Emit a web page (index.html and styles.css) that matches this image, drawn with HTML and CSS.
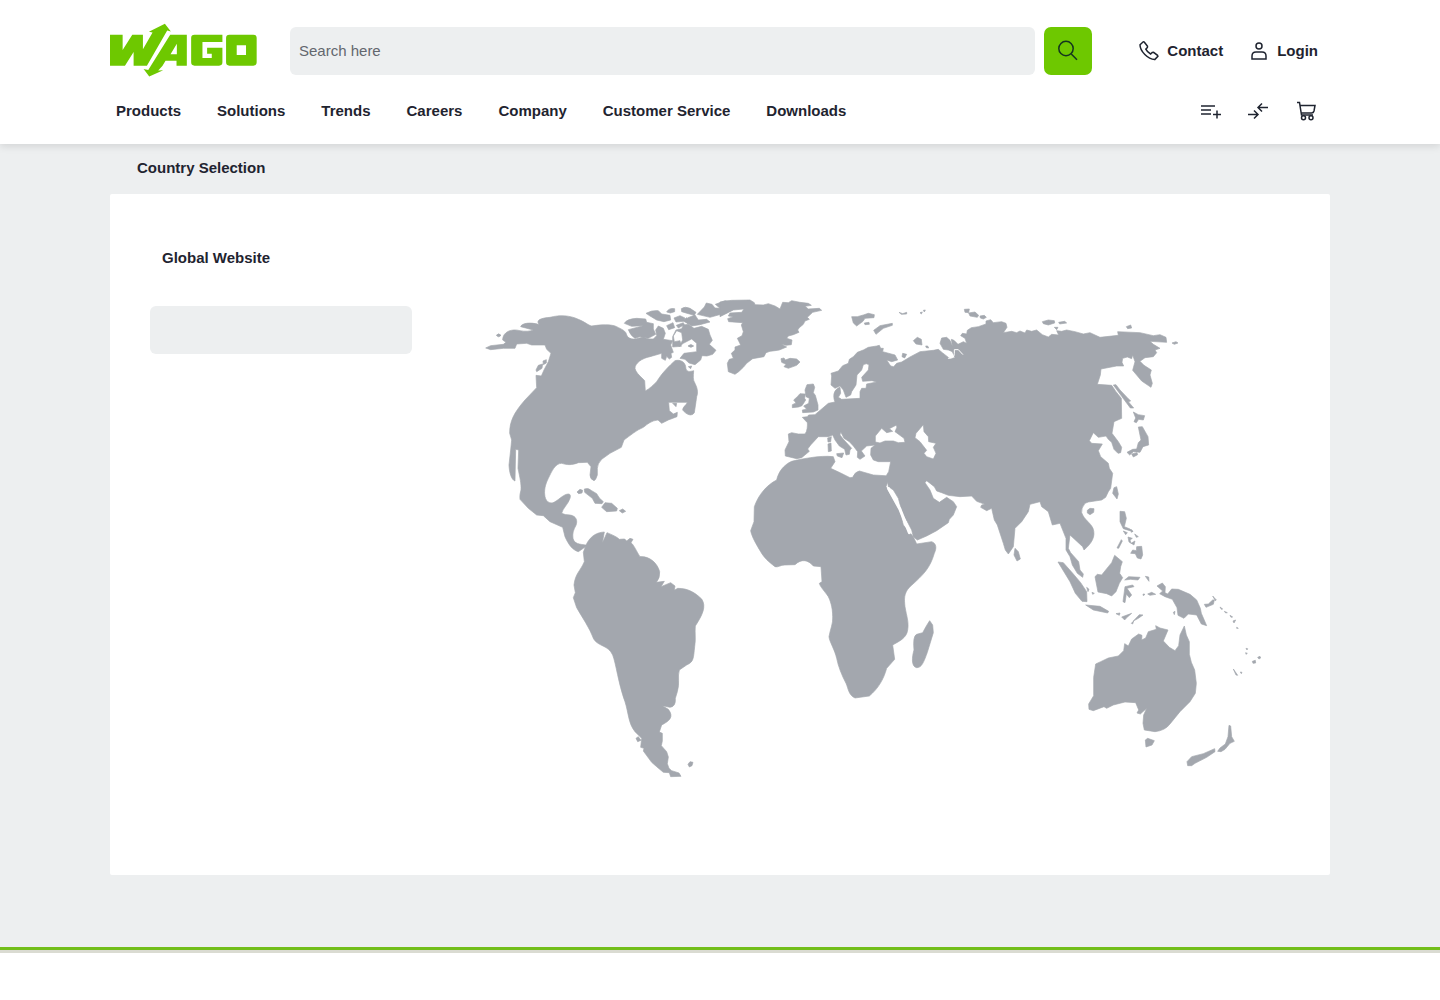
FILE: index.html
```html
<!DOCTYPE html>
<html lang="en">
<head>
<meta charset="utf-8">
<meta name="viewport" content="width=device-width, initial-scale=1">
<title>Country Selection | WAGO</title>
<link rel="stylesheet" href="styles.css">
</head>
<body>
<header class="site-header">
  <div class="container">
    <div class="top-row">
      <a class="logo" href="#" aria-label="WAGO">
        <svg viewBox="30 28 442 162" aria-hidden="true">
          <path d="M30 60H68V106L97 60H129V104L158 53L147 51L195 27L213 50L202 47L141 153H101V112L75 153H30Z"/>
          <path d="M211 60H261V153H230V138H197L188 153L175 168L190 167L148 186L131 163L145 166ZM231 87L212 119H231Z"/>
          <path fill-rule="evenodd" d="M284 60H368V82H308V130H336V117H322V99H368V143Q368 153 358 153H284Q274 153 274 143V70Q274 60 284 60ZM389 60H461Q471 60 471 70V143Q471 153 461 153H389Q379 153 379 143V70Q379 60 389 60ZM411 92V121H439V92Z"/>
        </svg>
      </a>
      <form class="search" role="search">
        <input class="search-input" type="search" placeholder="Search here" aria-label="Search here">
        <button class="search-button" type="button" aria-label="Search">
          <svg class="icon" viewBox="0 0 24 24"><circle cx="10" cy="9.500" r="7.200"/><path d="M15.300 15L21 20.700"/></svg>
        </button>
      </form>
      <div class="account">
        <a href="#">
          <svg class="icon" viewBox="0 0 24 24"><path d="M6.300 2.800L3 5.800C3 12.500 11 20 17.700 20.600L20.900 17.300L20.500 16.300L16.600 13.300L15.200 13.500L13.600 15C11.700 14 9.800 12.200 8.800 10.200L10.400 8.500L10.500 7.200L7.400 3.200Q6.900 2.500 6.300 2.800Z"/></svg>
          Contact
        </a>
        <a href="#">
          <svg class="icon" viewBox="0 0 24 24"><circle cx="12" cy="7" r="3"/><path d="M5 20V17C5 14.500 6.700 13 9 13H15C17.300 13 19 14.500 19 17V20Z"/></svg>
          Login
        </a>
      </div>
    </div>
    <div class="nav-row">
      <nav class="main-nav" aria-label="Main">
        <a href="#">Products</a>
        <a href="#">Solutions</a>
        <a href="#">Trends</a>
        <a href="#">Careers</a>
        <a href="#">Company</a>
        <a href="#">Customer Service</a>
        <a href="#">Downloads</a>
      </nav>
      <div class="tools">
        <a href="#" aria-label="Lists"><svg class="icon" viewBox="0 0 24 24"><path d="M3 7H17M3 11H13M3 15H13M15 15.500H23M19 11.500V19.500"/></svg></a>
        <a href="#" aria-label="Compare"><svg class="icon" viewBox="0 0 24 24"><path d="M22 8.500H12M16 4.500L12 8.500L16 12.500M2 15.500H12M8 11.500L12 15.500L8 19.500"/></svg></a>
        <a href="#" aria-label="Cart"><svg class="icon" viewBox="0 0 24 24"><path d="M3 3.500H5.500L7.500 16H19M6 6.500H21L20 12Q19.500 14 17.500 14H7"/><circle cx="9.500" cy="18.700" r="2"/><circle cx="17" cy="18.700" r="2"/></svg></a>
      </div>
    </div>
  </div>
</header>
<main class="container">
  <h1 class="page-title">Country Selection</h1>
  <section class="panel">
    <div class="region-list">
      <a class="region-link" href="#">Global Website</a>
      <button class="region-select" type="button" aria-label="Select a region"></button>
    </div>
    <svg class="world-map" viewBox="485 298 778 482" role="img" aria-label="World map">
      <!-- North America -->
      <g transform="translate(480 290) scale(.33333)">
        <path d="M68 150C68 125 95 115 120 122C135 125 150 124 160 120L122 110C125 100 150 95 178 104C165 90 185 84 210 82C240 74 270 76 295 88C315 96 325 106 335 108C360 104 395 102 410 110C425 118 438 122 440 135C445 147 460 150 475 145L490 141L505 147L520 147L530 137L527 120L535 108L550 115L556 130L550 148L578 152L572 165L580 187L573 190L575 202L568 207L560 199L556 211L545 205L545 190L510 200C485 205 465 220 465 235C468 250 485 262 494 272L496 303C510 295 520 285 530 275C545 250 570 225 585 212C600 208 615 215 617 230C618 248 630 245 641 242C640 260 638 268 645 280C650 290 656 305 650 320L648 335L643 368C635 380 620 375 608 360C608 350 620 345 622 337L566 337L568 362L580 372L592 367L591 380L565 390L545 400L534 390C515 392 505 400 490 412C470 420 450 437 432 450L424 472L390 490L365 508Q352 522 352 535L352 555Q347 572 342 572Q330 568 330 555L333 530L322 517L295 518C275 526 262 525 245 520C225 520 215 545 205 565C195 585 193 600 194 612C195 635 210 643 222 637C240 627 250 613 265 612Q274 612 270 625C265 642 248 655 245 670Q255 675 270 675C290 678 293 693 288 706C280 720 277 730 279 745C283 762 297 762 322 766L310 775L295 785C278 780 266 765 255 740L248 712L210 695L190 677L170 675L145 655L120 628Q118 615 123 600C124 580 120 565 114 535L116 480L107 478L105 573C95 570 88 550 87 525L92 480L95 450L89 430C89 395 100 370 135 330L170 293L168 256L184 258L192 240L205 215L213 190L200 178L195 165L155 165L140 160L110 162L105 175L70 175L32 179L17 174L32 167L70 163L78 157ZM168 240L175 226L188 222L186 235L170 245ZM189 213L199 209V219L190 224Z"/>
        <path d="M49 136Q56 127 63 136Q56 145 49 136ZM433 100Q440 87 470 85L497 87L500 97L520 101L520 117L527 133L505 145L480 140L465 145Q450 135 445 119L490 107L455 109ZM498 70Q515 60 535 62L545 72L570 76L572 90L552 95L530 90L510 78ZM560 66Q567 53 584 56L584 65L571 69ZM604 56Q615 48 630 55L648 67L643 76L628 72L605 65ZM560 107L579 98L584 113L566 119ZM582 84L600 77L615 84L610 94L588 96ZM589 106L610 98L613 104L595 114ZM608 92L620 83L632 90L624 101ZM624 83L645 75L655 90L680 88L690 96L660 104L635 108L622 100ZM652 73L673 51L679 39L696 43L705 54L720 55L706 43L735 32L770 37L775 46L740 68L690 82ZM578 140L588 120L605 116L610 105L625 103L642 115L665 109L685 118L690 135L697 151L688 163L708 181L698 193L681 198L666 197L662 210L645 224L627 219L615 208L600 205L612 190L650 185L650 160L635 147L610 160L597 170L608 150L605 128L590 122L580 138L583 155L600 152L604 169L578 171ZM624 168Q633 159 641 168Q633 176 624 168ZM625 230L635 228L632 236ZM578 340L590 340L588 350Z"/>
        <path d="M291 606L300 598L308 601L306 609L296 611ZM313 597Q325 592 335 602L350 611L358 624L370 635L366 641L345 640L337 625L314 607ZM365 652L375 638L395 640L412 655L410 663L380 665ZM418 662L428 657L437 664L427 669Z"/>
      </g>
      <!-- South America -->
      <g transform="translate(560 520) scale(.33333)">
        <path d="M77 78C86 55 105 37 133 36L127 69L141 38C158 45 170 50 178 58L194 57L200 63L210 55L219 58L213 68C222 75 230 95 240 110C270 108 292 130 299 155Q300 175 289 187L313 184L303 200L332 188L345 198L343 211L353 205C385 205 405 218 425 237C440 260 427 285 406 318C404 340 408 355 404 380C400 415 402 425 380 435L358 450C352 470 360 490 352 515L346 535Q348 560 330 562L307 557L325 568C342 590 330 602 305 615L298 636L307 640V663L304 677L320 695L325 711L322 731L327 745L335 752L357 759L363 769L332 770L328 758L310 757L290 740L275 727L250 693L252 685L242 682L245 655L225 635C205 610 206 580 195 545C175 490 168 430 158 405C145 375 115 380 101 357C90 325 65 290 50 263L40 233L46 218L42 195C46 160 60 155 73 125L70 97ZM228 655L235 650L243 661L233 665ZM384 733L390 725L399 727L396 737L388 741Z"/>
      </g>
      <!-- Europe, Asia and the northern islands -->
      <g transform="translate(720 290) scale(.33333)">
        <path d="M0 36L35 31L90 30L103 38L105 44L130 45L145 41L165 48L180 57L188 37L205 38L215 32L240 37L265 40L274 46L255 49L265 57L298 55L305 61L278 67L262 82L268 88L255 93L250 103L238 113L233 120L237 127L220 134L205 138L200 145L216 150L214 164L198 166L184 163L200 171L178 180L165 182L150 184L138 188L132 200L98 206L80 220L70 232L56 245L45 253L25 245L22 220L28 208L40 205L34 190L45 180L45 171L62 165L52 145L66 137L70 125L64 105L68 98L26 95L23 86L40 80L25 78L30 69L65 67L72 57L40 60L0 80Z"/>
        <path d="M183 206L192 204L196 210L210 205L230 207L240 216L230 226L205 235L192 230L198 223L185 217ZM261 284L280 282L284 292L280 308L286 316L294 345L294 360L280 366L248 368L247 360L260 358L251 348L266 340L268 325L258 320L255 300ZM232 320L240 311L256 312L254 325L257 330L246 347L236 351L217 353V344L228 339L221 330ZM323 444L334 440L332 455L324 456ZM324 462L333 459L334 483L325 485ZM350 491L371 489L366 503L352 498ZM395 80L412 80L430 75L445 70L463 74L462 83L435 85L429 94L410 108L400 99ZM433 99L447 97L448 103L435 104ZM461 121L480 107L517 100L517 106L490 115L468 133ZM537 67L548 71L560 67L560 72L544 73ZM600 68L607 66L604 72ZM610 61L616 60L613 66ZM580 152L592 142L604 148L606 165L588 162ZM617 168L623 168L626 174L619 173ZM548 190L560 193L554 204L546 200ZM733 58L748 57L746 68L735 67ZM746 69L765 66L776 76L772 82L750 78ZM780 78L793 76L799 82L790 87L781 84ZM967 95L985 90L1003 92L1004 99L985 105L970 101ZM1016 97L1034 94L1040 99L1019 102ZM1003 112L1014 112L1010 119ZM1219 110L1232 105L1235 114L1223 116ZM1356 159L1368 155L1374 159L1363 163Z"/>
        <path fill-rule="evenodd" d="M205 432L215 428L235 432L255 432C262 425 263 405 262 398L247 382L262 380L266 375L285 374L325 340L345 336C338 320 340 298 360 292L362 310L355 322L365 328L420 325L420 305L425 295L438 295L440 282L470 276L456 272L428 274L425 262L445 240L447 225Q440 218 430 224L425 240L411 255L408 285L395 305L392 315L378 322L370 300L360 288L345 295L333 285L335 258L333 250L355 243L368 227L385 220L388 208L400 200L412 187L430 180L445 172L470 168L478 166L482 175L490 175L488 185L525 195L533 210L515 215L500 210L512 228L521 230L530 220L545 216L570 201L600 185L640 181L655 178L667 188L690 206L705 203L697 185L685 180L670 178L660 160L665 144L680 142L690 151L697 168L694 148L702 151L714 163L730 155L740 160L735 145L722 137L727 130L740 132L742 121L754 113L775 110L798 102L798 93L812 89L820 98L845 95L858 100L861 112L850 128L875 124L890 128L900 123L915 129L920 120L935 124L950 120L967 134L985 141L995 133L1016 135L1010 122L1025 124L1040 120L1065 125L1090 132L1110 128L1140 142L1195 136L1193 125L1260 128L1300 137L1320 134L1338 142L1340 157L1290 154L1300 163L1320 175L1305 180L1310 188L1300 200L1275 203L1260 214L1272 226L1294 240L1290 255L1297 280L1293 292L1265 273L1238 241L1245 215L1238 195L1235 206L1222 201L1208 205L1206 217L1211 228L1190 228L1143 237L1141 255L1132 283L1175 286L1188 305L1204 325L1205 385L1182 395L1176 430L1195 455L1205 472L1202 488L1194 490L1182 478L1175 457L1165 448L1158 438L1135 442L1120 428L1108 452L1115 460L1147 462L1135 482L1142 500L1165 520L1168 535L1178 550L1172 595L1165 605L1157 622L1145 630L1105 636L1095 640Q1083 655 1085 668C1093 690 1111 697 1119 715C1128 740 1115 760 1092 780L1088 770L1050 735L1045 775L1052 788L1076 815L1080 840L1090 852L1088 862L1072 850L1057 825L1050 800L1038 780L1038 745L1020 700L997 705L985 665L965 650L960 635L930 643L925 665L905 695L885 715L880 770L865 792L856 780L850 760L832 705L823 690L815 655L800 662L782 652L785 645L795 643L770 634L755 618L720 620L685 616L665 608L650 603L643 590L620 572L615 578L630 600L640 625L658 637L680 622L700 635L710 650L700 675L688 688L685 698L650 722L620 738L592 750L580 740L575 720L562 695L548 672L535 625L520 600L505 590L500 555L506 545L512 515L475 515L460 510L452 495L453 475L465 465L440 468L424 483L435 498L420 508L412 502L413 485L400 468L388 455L372 445L362 425L360 435L372 450L395 475L390 480L388 493L378 495L374 478L358 468L345 450L338 435L325 440L295 440L272 465L263 477L268 484L245 503L230 506L196 498L195 480L207 455ZM466 456L466 438L485 415L500 428L518 424L508 416L528 406L531 411L525 425L552 445L555 457L535 458L520 453L495 453L480 459ZM585 443L588 430L610 404L612 425L625 440L626 455L648 460L640 472L648 490L640 507L620 500L612 490L620 481L600 455Z"/>
        <path class="inlet" d="M685 205Q703 206 703 190V179H715L728 193"/>
        <path d="M1180 285L1188 284L1200 300L1222 323L1232 333L1225 335L1241 354L1231 354L1205 319ZM1240 366L1255 374L1274 377L1270 390L1256 388L1249 398L1242 395L1247 384ZM1255 411L1267 410L1284 440L1286 465L1269 470L1260 487L1240 485L1229 495L1221 487L1238 478L1250 477L1255 458L1263 450ZM1235 492L1251 488L1253 494L1240 501Z"/>
      </g>
      <!-- Africa and Madagascar -->
      <g transform="translate(740 440) scale(.33333)">
        <path d="M110 120C115 97 130 75 155 64C180 58 240 45 280 50L285 65L272 85L302 99L330 113L338 112Q345 95 358 93L400 105L450 108L438 140L480 215L490 255L520 290L530 312L575 305C590 310 590 325 583 340C570 385 550 405 510 440C490 460 493 480 495 500C500 530 507 545 503 570C500 595 475 605 458 615L464 658L440 685C430 720 415 745 388 768L345 774C325 765 325 745 318 730C305 705 295 680 290 655C285 630 268 605 267 590C270 570 280 550 278 530C278 500 270 480 265 470C255 455 240 440 238 430L246 425L243 380L220 378C205 360 185 355 165 374L135 375C120 375 115 383 105 380C85 365 70 350 62 335C50 315 35 290 32 272L42 245L43 200C55 165 80 135 110 120ZM569 542L578 555L580 578L562 637C552 665 545 684 530 683C513 680 516 650 522 630Q518 588 530 583L548 578Q560 555 569 542Z"/>
        <path class="red-sea" d="M446 146L480 208L508 278"/>
      </g>
      <!-- South-east Asian islands -->
      <g transform="translate(960 440) scale(.33333)">
        <path d="M165 325L175 335L181 357L171 363L162 345ZM382 211L390 205L402 206L401 217L390 224L382 219ZM462 143L470 140L475 162L471 177L458 160ZM480 214L494 215L499 235L493 260L510 267L519 275L490 266L480 245ZM490 273L502 278L497 284ZM513 268L519 274L514 277ZM504 291L517 295L510 300L513 310L525 303L522 315L507 306ZM524 282L535 290L529 292ZM484 299L487 303L476 325L471 324ZM512 340L518 330L529 332L530 320L545 319L548 345L543 357L532 354L526 341ZM294 366L310 368L340 402L362 428L380 455L381 485L366 484L346 460L330 425ZM377 495L420 499L446 514L443 519L400 510ZM405 410L412 403L425 405L445 380L455 368L464 346L487 365L482 380L479 400L488 413L478 430L468 455L455 468L440 461L414 456ZM494 420L506 410L540 412L534 420L512 418ZM495 440L518 435L522 440L501 445L515 465L508 473L499 462L495 488L489 485ZM556 409L566 411L567 424ZM380 442L387 448L384 455ZM396 457L403 460L398 463ZM468 521L480 519L478 526ZM485 531L515 520L499 534L494 540ZM520 543L538 524L549 525L535 535ZM514 550L521 543L518 552ZM549 462L555 463L550 467ZM563 462L575 457L587 463L570 466Z"/>
      </g>
      <!-- Australia and Oceania -->
      <g transform="translate(1050 540) scale(.33333)">
        <path d="M131 412L137 372L152 365L175 354L205 348L221 332L224 311L235 318L245 297L266 282L276 286L275 300L287 294L295 275L319 268L317 257L330 264L354 270L340 303L358 322L375 332L386 317L390 285L403 258L409 285L418 305L418 343L424 367L434 390L439 430L436 460L420 485L390 515L360 552Q345 572 315 575L283 570L279 550L281 525L290 505L271 522L261 519L266 510L257 488L225 486L190 495L170 505L162 500L130 512L117 508L116 492L131 467ZM286 600L293 595L313 602L306 615L288 621ZM537 556L542 558L545 590L553 604L540 610L525 628L513 635L503 634L510 624L526 612L534 590ZM494 626L495 635L470 652L435 670L425 677L413 677L411 665L425 650L460 641ZM321 138L337 129L346 140L345 158L353 162L365 147L385 148L420 163L440 180L451 205L454 220L470 257L454 252L440 225L415 222L402 235L384 226L381 203L367 178L345 170L329 161L338 153ZM463 193L475 192L488 180L493 180L490 193L468 202ZM488 168L499 180L496 182ZM510 201L518 207L514 208ZM523 214L532 218L527 219ZM540 226L548 231L543 232ZM549 243L557 240L552 249ZM560 262L565 265L560 265ZM588 325L593 326L591 330ZM587 338L592 340L588 343ZM623 352L630 349L632 354L627 357ZM607 364L616 361L617 369L609 370ZM550 387L563 406L558 405ZM571 396L576 397L574 401ZM370 217L375 214L373 224Z"/>
      </g>
    </svg>
  </section>
</main>
<footer class="site-footer"></footer>
</body>
</html>
```
FILE: styles.css
```css
* {
  box-sizing: border-box;
}

body {
  margin: 0;
  min-height: 100vh;
  display: flex;
  flex-direction: column;
  background: #edeff0;
  color: #1f2430;
  font-family: "Liberation Sans", Arial, sans-serif;
  font-size: 15px;
  line-height: 24px;
}

a {
  color: inherit;
  text-decoration: none;
  font-weight: 700;
}

.container {
  width: 100%;
  max-width: 1220px;
  margin: 0 auto;
}

.site-header {
  background: #fff;
  box-shadow: 0 2px 8px rgba(0, 0, 0, 0.12);
  padding: 24px 0 21px;
}

.top-row,
.nav-row,
.account,
.account a,
.tools,
.main-nav {
  display: flex;
  align-items: center;
}

.logo svg {
  display: block;
  width: 147px;
  height: 54px;
  fill: #6ec800;
  overflow: visible;
}

.search {
  flex: 1;
  display: flex;
  gap: 9px;
  margin-left: 33px;
}

.search-input {
  flex: 1;
  min-width: 0;
  height: 48px;
  padding: 0 9px 2px;
  border: 0;
  border-radius: 6px;
  background: #edeff0;
  font: inherit;
}

.search-input::placeholder {
  color: #63676e;
  opacity: 1;
}

.search-button {
  display: grid;
  place-items: center;
  width: 48px;
  height: 48px;
  padding: 0;
  border: 0;
  border-radius: 7px;
  background: #6ec800;
  color: #14351f;
}

.icon {
  display: block;
  width: 24px;
  height: 24px;
  fill: none;
  stroke: currentColor;
  stroke-width: 1.5;
}

.account {
  gap: 24px;
  margin: 0 12px 0 45px;
}

.account a {
  gap: 6px;
}

.nav-row {
  justify-content: space-between;
  padding: 9px 12px 0 6px;
  margin-top: 12px;
}

.main-nav {
  gap: 36px;
}

.tools {
  gap: 24px;
}

.page-title {
  margin: 0;
  padding: 12px 27px 14px;
  font-size: 15px;
  line-height: 24px;
}

.panel {
  display: grid;
  grid-template-columns: 262px minmax(0, 1fr);
  column-gap: 73px;
  padding: 52px 67px 95px 40px;
  background: #fff;
  border-radius: 2px;
}

.region-list {
  display: flex;
  flex-direction: column;
  gap: 36px;
}

.region-link {
  padding: 0 12px;
}

.region-select {
  height: 48px;
  border: 0;
  border-radius: 6px;
  background: #edeff0;
}

.world-map {
  display: block;
  width: 100%;
  margin-top: 52px;
  fill: #a3a7ae;
  stroke: #a3a7ae;
  stroke-width: 2;
  stroke-linejoin: round;
}

.inlet,
.red-sea {
  fill: none;
  stroke: #fff;
  stroke-width: 3;
  stroke-linecap: round;
}

.red-sea {
  stroke-width: 9;
}

.site-footer {
  flex: 1;
  margin-top: 72px;
  border-top: 3px solid #72be1a;
  background: #fff;
  box-shadow: inset 0 3px #dadbd2;
}
```
